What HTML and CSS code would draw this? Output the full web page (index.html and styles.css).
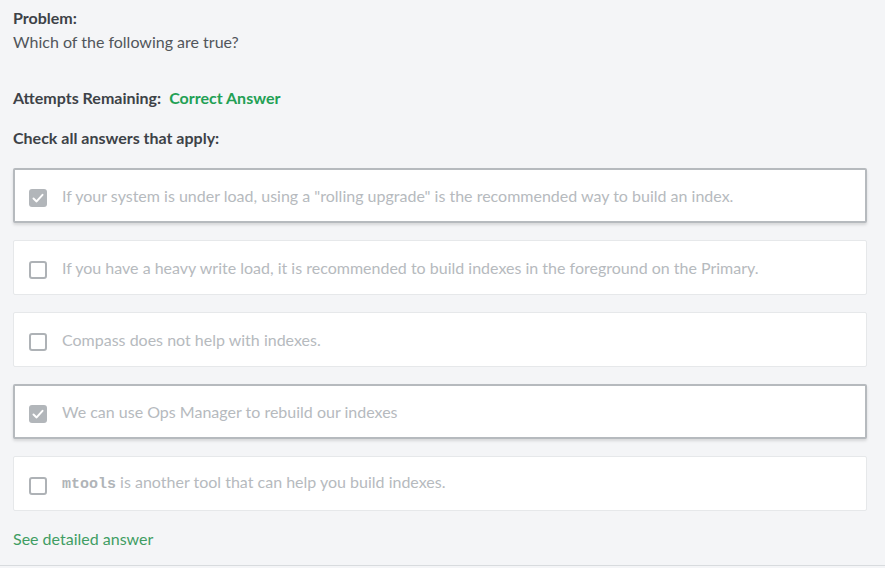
FILE: index.html
```html
<!DOCTYPE html>
<html>
<head>
<meta charset="utf-8">
<link rel="stylesheet" href="styles.css">
</head>
<body>
<div class="page">
  <div class="problem">
    <div class="label">Problem:</div>
    <div class="question">Which of the following are true?</div>
  </div>
  <div class="attempts"><span class="label">Attempts Remaining:</span><span class="correct">Correct Answer</span></div>
  <div class="check-label">Check all answers that apply:</div>
  <div class="options">
    <div class="option selected">
      <span class="box checked"><svg viewBox="0 0 18 18" width="18" height="18"><path d="M4.5 9.5 L7.6 12.4 L13.5 5.8" fill="none" stroke="#fff" stroke-width="2" stroke-linecap="round" stroke-linejoin="round"/></svg></span>
      <span class="text">If your system is under load, using a "rolling upgrade" is the recommended way to build an index.</span>
    </div>
    <div class="option">
      <span class="box"></span>
      <span class="text">If you have a heavy write load, it is recommended to build indexes in the foreground on the Primary.</span>
    </div>
    <div class="option">
      <span class="box"></span>
      <span class="text">Compass does not help with indexes.</span>
    </div>
    <div class="option selected">
      <span class="box checked"><svg viewBox="0 0 18 18" width="18" height="18"><path d="M4.5 9.5 L7.6 12.4 L13.5 5.8" fill="none" stroke="#fff" stroke-width="2" stroke-linecap="round" stroke-linejoin="round"/></svg></span>
      <span class="text">We can use Ops Manager to rebuild our indexes</span>
    </div>
    <div class="option">
      <span class="box"></span>
      <span class="text"><code>mtools</code> is another tool that can help you build indexes.</span>
    </div>
  </div>
  <a class="detail">See detailed answer</a>
</div>
</body>
</html>
```
FILE: styles.css
```css
html, body {
  margin: 0;
  padding: 0;
  background: #f4f5f7;
}
body {
  font-family: "Lato", "Liberation Sans", sans-serif;
  color: #3d4247;
  font-size: 16px;
}
.page {
  height: 566px;
  border-bottom: 1px solid #d8dbde;
  padding: 8px 18px 0 13px;
  box-sizing: border-box;
}
.label {
  font-weight: bold;
  color: #3d4247;
}
.problem .label {
  line-height: 20px;
}
.question {
  margin-top: 2px;
  line-height: 24px;
  color: #51565b;
}
.attempts {
  margin-top: 34px;
  line-height: 20px;
  display: flex;
  gap: 8px;
}
.correct {
  color: #22a054;
  font-weight: bold;
}
.check-label {
  margin-top: 20px;
  line-height: 20px;
  font-weight: bold;
}
.options {
  margin-top: 20px;
  display: flex;
  flex-direction: column;
  gap: 17px;
}
.option {
  height: 55px;
  box-sizing: border-box;
  background: #fff;
  border: 1px solid #e6e8ea;
  border-radius: 2px;
  display: flex;
  align-items: center;
  padding-left: 15px;
  gap: 15px;
}
.option.selected {
  border: 2px solid #b6babe;
  padding-left: 14px;
  box-shadow: 0 2px 3px rgba(0, 0, 0, 0.12);
}
.box {
  width: 18px;
  height: 18px;
  box-sizing: border-box;
  border: 2px solid #aeb2b6;
  border-radius: 3px;
  margin-top: 5px;
  flex: none;
}
.box.checked {
  border: none;
  background: #b2b6ba;
  display: flex;
}
.text {
  color: #b6babe;
  line-height: 20px;
}
code {
  font-family: "Liberation Mono", "DejaVu Sans Mono", monospace;
  font-weight: bold;
  font-size: 15px;
  color: #b0b4b8;
}
.detail {
  display: block;
  margin-top: 18px;
  line-height: 20px;
  color: #3f9d63;
}
```
